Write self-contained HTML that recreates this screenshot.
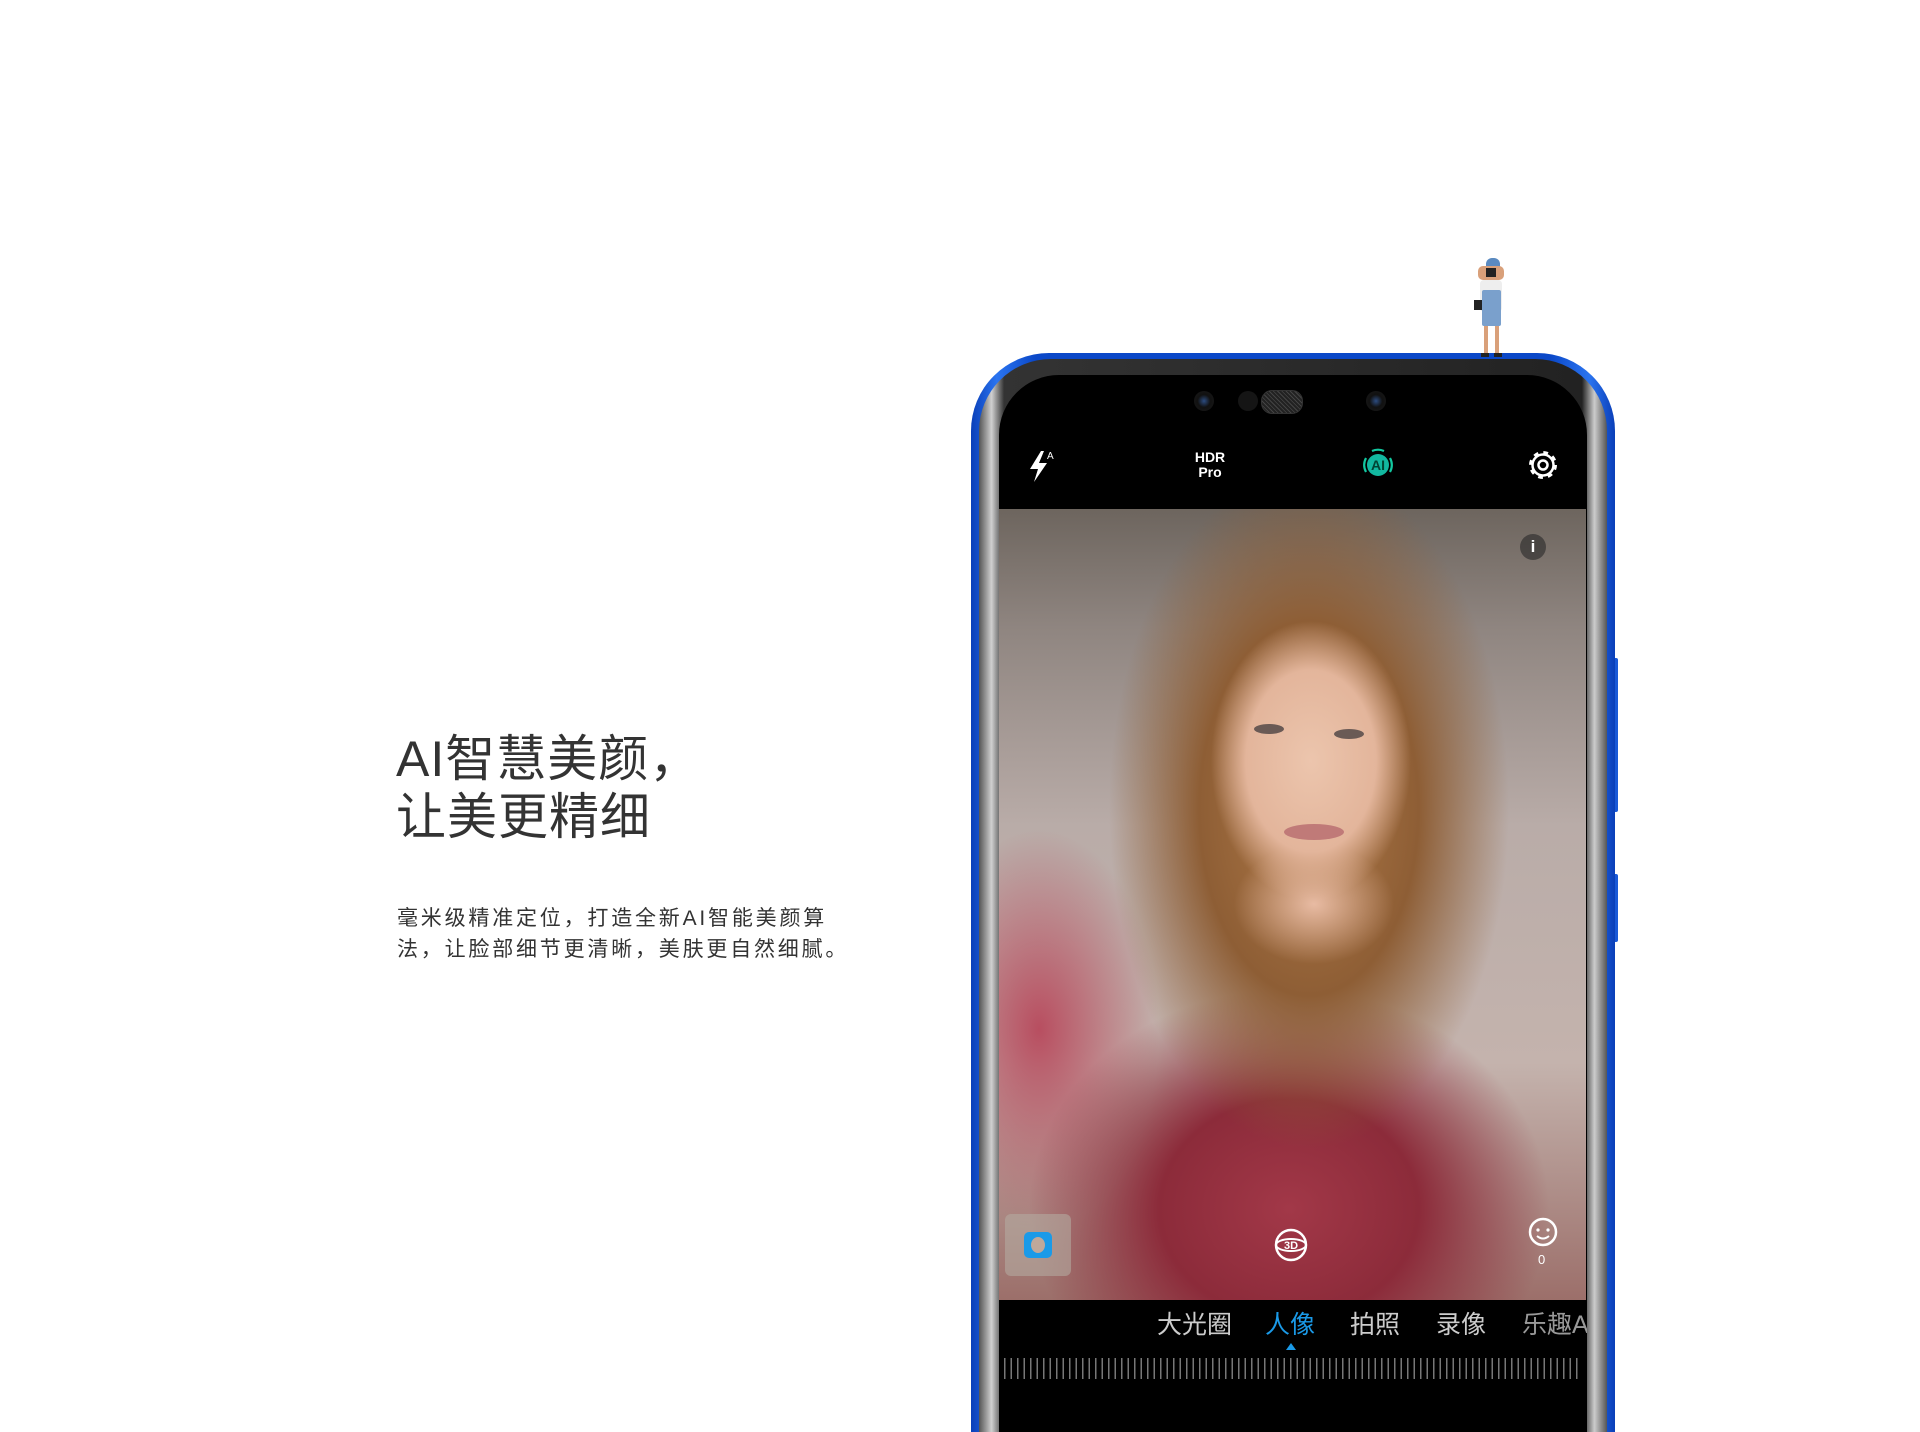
<!DOCTYPE html>
<html style="overflow:hidden;height:1432px"><head><meta charset="utf-8"><style>
html,body{margin:0;width:1920px;height:1432px;overflow:hidden}
body{background:#fff;position:relative;font-family:"Liberation Sans","Noto Sans CJK SC",sans-serif}
.a{position:absolute}
.t1{left:396px;top:730px;font-size:50px;line-height:58px;color:#333;letter-spacing:1px}
.t2{left:397px;top:903px;font-size:21px;line-height:31px;color:#333;letter-spacing:2.8px}
.phone{left:971px;top:353px;width:644px;height:1079px;border-radius:78px 78px 0 0;overflow:hidden;background:linear-gradient(90deg,#0a3fb8,#2a74f0 4%,#0b48c8 10%,#0b48c8 90%,#2a74f0 96%,#0a3fb8)}
.bez{left:8px;top:6px;right:8px;bottom:0;border-radius:72px 72px 0 0;background:linear-gradient(90deg,#555,#d0d0d0 2%,#333 4%,#222 96%,#ccc 98%,#555)}
.scr{left:20px;top:16px;right:20px;bottom:0;border-radius:60px 60px 0 0;background:#000;overflow:hidden}
.photo{left:0;top:134px;width:587px;height:791px;overflow:hidden;background:
radial-gradient(ellipse 100px 140px at 312px 252px,#ecc5ad 0,#e3b59b 65%,rgba(200,150,120,0) 100%),
radial-gradient(ellipse 80px 60px at 315px 395px,#e8bba3 0,rgba(220,170,140,0) 100%),
radial-gradient(ellipse 200px 340px at 310px 300px,#b07a48 0,#8e5e35 55%,rgba(120,80,50,0) 100%),
radial-gradient(ellipse 260px 220px at 290px 700px,#a23848 0,#8c2b3a 50%,rgba(120,40,50,0) 100%),
radial-gradient(ellipse 120px 200px at 40px 520px,#b84e60 0,rgba(180,80,90,0) 100%),
linear-gradient(180deg,#6d655e 0,#8f8580 15%,#b9aca8 40%,#c4b3ad 70%,#9c6f6a 100%)}
.ic{color:#fff}
.mode{font-size:25px;line-height:32px;color:#ccc;white-space:nowrap}
</style></head><body>
<div class="a t1">AI智慧美颜，<br>让美更精细</div>
<div class="a t2">毫米级精准定位，打造全新AI智能美颜算<br>法，让脸部细节更清晰，美肤更自然细腻。</div>

<div class="a" style="left:1613px;top:658px;width:5px;height:154px;background:#1a5ad8;border-radius:2px"></div>
<div class="a" style="left:1613px;top:874px;width:5px;height:68px;background:#1a5ad8;border-radius:2px"></div>

<div class="a phone"><div class="a bez"><div class="a scr">
 <div class="a" style="left:195px;top:16px;width:20px;height:20px;border-radius:50%;background:radial-gradient(circle,#2c4c80 0,#111 45%,#1a1a1a)"></div>
 <div class="a" style="left:239px;top:16px;width:20px;height:20px;border-radius:50%;background:#151515"></div>
 <div class="a" style="left:262px;top:15px;width:40px;height:22px;border-radius:11px;background:repeating-linear-gradient(45deg,#222 0 2px,#444 2px 3px);border:1px solid #333"></div>
 <div class="a" style="left:367px;top:16px;width:20px;height:20px;border-radius:50%;background:radial-gradient(circle,#2c4c80 0,#111 45%,#1a1a1a)"></div>
 <svg class="a" style="left:28px;top:73px" width="30" height="36" viewBox="0 0 30 36"><path d="M14 3L3 21h8l-4 13 13-19h-8l5-12z" fill="#fff"/><text x="20" y="11" font-size="10" fill="#fff" font-family="Liberation Sans">A</text></svg>
 <div class="a ic" style="left:186px;top:75px;width:50px;text-align:center;font-size:14px;font-weight:bold;line-height:15px">HDR<br>Pro</div>
 <svg class="a" style="left:362px;top:72px" width="34" height="36" viewBox="0 0 34 36"><circle cx="17" cy="18" r="11" fill="#12b8a0"/><path d="M5 11a15 15 0 0 0 0 14M29 11a15 15 0 0 1 0 14M11 4a15 15 0 0 1 12 0" stroke="#12c8a0" stroke-width="2.2" fill="none"/><text x="17" y="23" text-anchor="middle" font-size="14" font-weight="bold" fill="#043" font-family="Liberation Sans">AI</text></svg>
 <svg class="a" style="left:526px;top:72px" width="36" height="36" viewBox="0 0 36 36"><circle cx="18" cy="18" r="12" stroke="#fff" stroke-width="4" fill="none" stroke-dasharray="4.5 4.92"/><circle cx="18" cy="18" r="10.5" stroke="#fff" stroke-width="2.5" fill="none"/><circle cx="18" cy="18" r="4.5" stroke="#fff" stroke-width="2.5" fill="none"/></svg>
 <div class="a photo">
  <div class="a" style="left:521px;top:25px;width:26px;height:26px;border-radius:50%;background:rgba(40,40,40,.6);color:#fff;font-size:17px;font-weight:bold;text-align:center;line-height:26px">i</div>
  <div class="a" style="left:255px;top:215px;width:30px;height:10px;border-radius:50%;background:#6a5a55"></div>
  <div class="a" style="left:335px;top:220px;width:30px;height:10px;border-radius:50%;background:#6a5a55"></div>
  <div class="a" style="left:285px;top:315px;width:60px;height:16px;border-radius:50%;background:#c07a78"></div>
  <div class="a" style="left:6px;top:705px;width:66px;height:62px;border-radius:6px;background:rgba(180,170,160,.6)"></div>
  <div class="a" style="left:25px;top:723px;width:28px;height:26px;border-radius:5px;background:#1a9ae8"><div style="margin:5px 7px;width:14px;height:16px;border-radius:50%;background:#c0a89a"></div></div>
  <svg class="a" style="left:274px;top:718px" width="36" height="36" viewBox="0 0 36 36"><circle cx="18" cy="18" r="15" stroke="#fff" stroke-width="2.5" fill="none"/><ellipse cx="18" cy="18" rx="15" ry="6" stroke="#fff" stroke-width="2" fill="none"/><text x="18" y="22" text-anchor="middle" font-size="11" font-weight="bold" fill="#fff" font-family="Liberation Sans">3D</text></svg>
  <svg class="a" style="left:526px;top:705px" width="36" height="36" viewBox="0 0 36 36"><circle cx="18" cy="18" r="13" stroke="#fff" stroke-width="2.5" fill="none"/><circle cx="13" cy="16" r="1.6" fill="#fff"/><circle cx="23" cy="16" r="1.6" fill="#fff"/><path d="M12 22q6 5 12 0" stroke="#fff" stroke-width="2" fill="none"/></svg>
  <div class="a" style="left:539px;top:743px;color:#fff;font-size:13px">0</div>
 </div>
 <div class="a mode" style="left:158px;top:934px">大光圈</div>
 <div class="a mode" style="left:266px;top:934px;color:#1a9ae8">人像</div>
 <div class="a mode" style="left:351px;top:934px">拍照</div>
 <div class="a mode" style="left:437px;top:934px">录像</div>
 <div class="a mode" style="left:523px;top:934px;color:#999">乐趣A</div>
 <div class="a" style="left:287px;top:968px;width:0;height:0;border-left:5px solid transparent;border-right:5px solid transparent;border-bottom:7px solid #1a9ae8"></div>
 <div class="a" style="left:5px;top:983px;width:578px;height:21px;background:repeating-linear-gradient(90deg,#777 0 1.5px,transparent 1.5px 6.5px)"></div>
</div></div></div>

<div class="a" style="left:1486px;top:258px;width:14px;height:10px;border-radius:6px 6px 2px 2px;background:#5a8ac0"></div>
<div class="a" style="left:1478px;top:266px;width:26px;height:14px;background:#d9a07a;border-radius:5px"></div>
<div class="a" style="left:1486px;top:268px;width:10px;height:9px;background:#222"></div>
<div class="a" style="left:1480px;top:280px;width:22px;height:32px;background:#eee;border-radius:4px"></div>
<div class="a" style="left:1482px;top:290px;width:19px;height:36px;background:#7aa0cc;border-radius:2px"></div>
<div class="a" style="left:1474px;top:300px;width:8px;height:10px;background:#222"></div>
<div class="a" style="left:1484px;top:326px;width:4px;height:29px;background:#d9a07a"></div>
<div class="a" style="left:1495px;top:326px;width:4px;height:29px;background:#d9a07a"></div>
<div class="a" style="left:1481px;top:353px;width:8px;height:4px;background:#222"></div>
<div class="a" style="left:1494px;top:353px;width:8px;height:4px;background:#222"></div>
</body></html>
